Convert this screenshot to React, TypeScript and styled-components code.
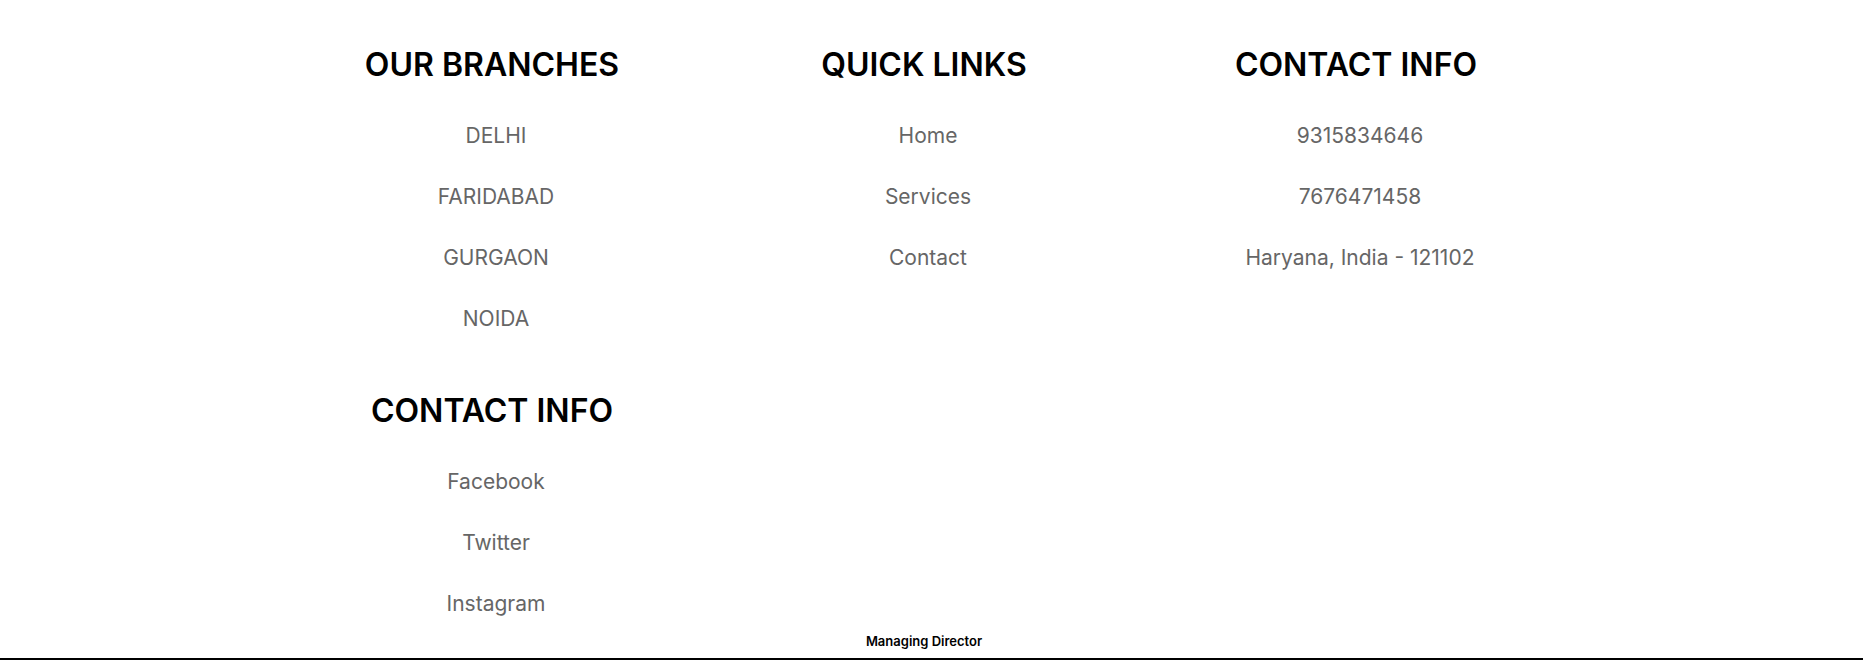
import styled, { createGlobalStyle } from "styled-components";

const GlobalStyle = createGlobalStyle`
  html, body {
    margin: 0;
    padding: 0;
    background: #fff;
  }
  body {
    font-family: "Inter", "Liberation Sans", sans-serif;
  }
`;

type Column = {
  title: string;
  items: string[];
};

const columns: Column[] = [
  { title: "OUR BRANCHES", items: ["DELHI", "FARIDABAD", "GURGAON", "NOIDA"] },
  { title: "QUICK LINKS", items: ["Home", "Services", "Contact"] },
  {
    title: "CONTACT INFO",
    items: ["9315834646", "7676471458", "Haryana, India - 121102"],
  },
  { title: "CONTACT INFO", items: ["Facebook", "Twitter", "Instagram"] },
];

const App = () => {
  return (
    <>
      <GlobalStyle />
      <Page>
        <Container>
          <Row>
            {columns.map((col, i) => (
              <Col key={i}>
                <Heading>{col.title}</Heading>
                <List>
                  {col.items.map((item) => (
                    <Item key={item}>{item}</Item>
                  ))}
                </List>
              </Col>
            ))}
          </Row>
          <Director>Managing Director</Director>
        </Container>
      </Page>
      <BottomRule />
    </>
  );
};

export default App;

const Page = styled.div`
  padding: 41px 15px 0 0;
`;

const Container = styled.div`
  max-width: 1320px;
  margin: 0 auto;
  padding: 0 12px;
  box-sizing: border-box;
`;

const Row = styled.div`
  display: flex;
  flex-wrap: wrap;
`;

const Col = styled.div`
  width: 33.3333%;
  display: flex;
  flex-direction: column;
  align-items: center;
  padding-bottom: 38px;

  &:last-child {
    padding-bottom: 0;
  }
`;

const Heading = styled.h2`
  margin: 0 0 16px;
  font-size: 32px;
  line-height: 48px;
  font-weight: 600;
  color: #000;
`;

const List = styled.ul`
  list-style: none;
  margin: 0;
  padding: 0 0 0 8px;
  display: flex;
  flex-direction: column;
  align-items: center;
`;

const Item = styled.li`
  font-size: 21px;
  line-height: 61px;
  color: #666;
`;

const Director = styled.p`
  margin: 0;
  text-align: center;
  font-size: 13px;
  line-height: 14px;
  font-weight: 600;
  color: #000;
`;

const BottomRule = styled.div`
  margin-top: 10px;
  height: 2px;
  background: #000;
`;
